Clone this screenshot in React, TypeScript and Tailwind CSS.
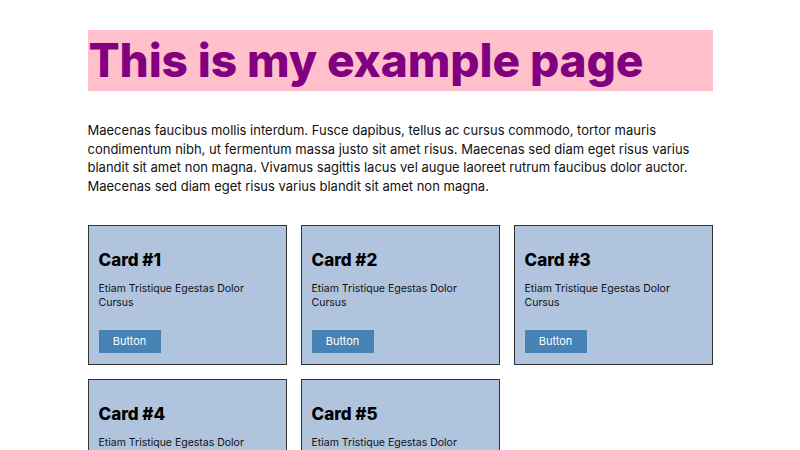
const cards = ['Card #1', 'Card #2', 'Card #3', 'Card #4', 'Card #5'];

function Card({ title }: { title: string }) {
  return (
    <div className="h-[140px] border border-[#333] bg-[#b0c4de] px-[10px] pt-[22px]">
      <h2 className="text-[17px] font-extrabold leading-[24px] text-black">{title}</h2>
      <p className="mt-[10px] text-[10.5px] leading-[14px] text-[#111]">Etiam Tristique Egestas Dolor Cursus</p>
      <button className="mt-[20px] h-[23px] w-[62px] bg-[#4682b4] text-[11px] text-white">Button</button>
    </div>
  );
}

export default function App() {
  return (
    <div className="min-h-[450px] bg-white font-['Inter',sans-serif]">
      <div className="mx-auto w-[625px] pt-[30px]">
        <h1 className="h-[61px] bg-[#ffc0cb] pl-[1px] text-[46px] font-extrabold leading-[61px] tracking-[-0.1px] text-[#800080]">
          This is my example page
        </h1>
        <p className="mt-[30px] text-[13px] leading-[18.7px] text-[#111]">
          Maecenas faucibus mollis interdum. Fusce dapibus, tellus ac cursus commodo, tortor mauris condimentum nibh,
          ut fermentum massa justo sit amet risus. Maecenas sed diam eget risus varius blandit sit amet non magna.
          Vivamus sagittis lacus vel augue laoreet rutrum faucibus dolor auctor. Maecenas sed diam eget risus varius
          blandit sit amet non magna.
        </p>
        <div className="mt-[29px] grid grid-cols-3 gap-[14px]">
          {cards.map(c => (
            <Card key={c} title={c} />
          ))}
        </div>
      </div>
    </div>
  );
}
